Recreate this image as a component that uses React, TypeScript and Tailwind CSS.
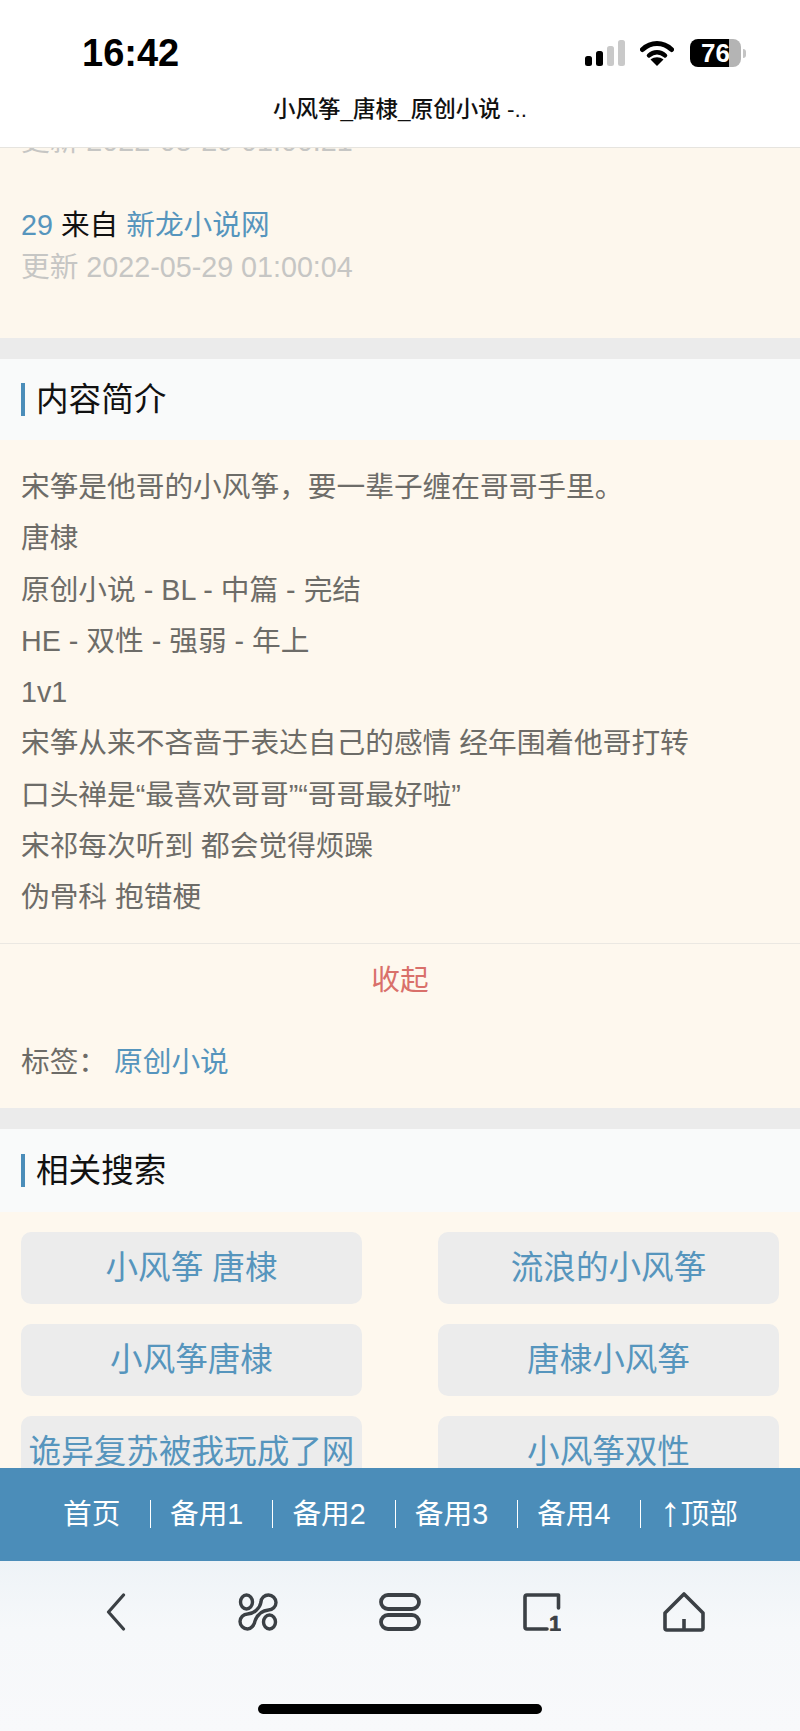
const introLines = [
  '宋筝是他哥的小风筝，要一辈子缠在哥哥手里。',
  '唐棣',
  '原创小说 - BL - 中篇 - 完结',
  'HE - 双性 - 强弱 - 年上',
  '1v1',
  '宋筝从来不吝啬于表达自己的感情 经年围着他哥打转',
  '口头禅是“最喜欢哥哥”“哥哥最好啦”',
  '宋祁每次听到 都会觉得烦躁',
  '伪骨科 抱错梗',
];

const related = ['小风筝 唐棣', '流浪的小风筝', '小风筝唐棣', '唐棣小风筝', '诡异复苏被我玩成了网', '小风筝双性'];

const navItems = ['备用1', '备用2', '备用3', '备用4'];

function SectionTitle({ title, tall }: { title: string; tall?: boolean }) {
  return (
    <div className={tall ? 'flex h-[83px] items-center bg-[#f9fafa] pl-[21px]' : 'flex h-[81px] items-center bg-[#f9fafa] pl-[21px]'}>
      <div className="h-[33px] w-[4px] bg-[#4b8db9]" />
      <h2 className="ml-[11px] text-[32.6px] leading-[40px] text-[#111]">{title}</h2>
    </div>
  );
}

function StatusIcons() {
  return (
    <div className="flex items-center">
      <svg width="40" height="26" viewBox="0 0 40 26">
        <rect x="0" y="16" width="7" height="10" rx="2.5" fill="#000" />
        <rect x="11" y="11" width="7" height="15" rx="2.5" fill="#000" />
        <rect x="22" y="6" width="7" height="20" rx="2.5" fill="#c9c9c9" />
        <rect x="33" y="0" width="7" height="26" rx="2.5" fill="#c9c9c9" />
      </svg>
      <svg className="ml-[15px]" width="34" height="26" viewBox="0 0 34 26" fill="none">
        <path d="M2.5 9.5C11 1.5 23 1.5 31.5 9.5" stroke="#000" strokeWidth="5" strokeLinecap="round" />
        <path d="M9 15.5C13.5 11 20.5 11 25 15.5" stroke="#000" strokeWidth="4.5" strokeLinecap="round" />
        <path d="M17 26L10.5 19.5C14.5 16.5 19.5 16.5 23.5 19.5Z" fill="#000" />
      </svg>
      <div className="ml-[16px] flex h-[28px] items-center">
        <div className="flex h-[28px] w-[39px] items-center justify-end rounded-l-[8px] bg-black">
          <span className="-mr-[1px] text-[26px] leading-[28px] font-bold text-white">76</span>
        </div>
        <div className="h-[28px] w-[12px] rounded-r-[8px] bg-[#b4b4b4]" />
        <div className="ml-[2px] h-[9px] w-[3px] rounded-r-full bg-[#c4c4c4]" />
      </div>
    </div>
  );
}

function ToolbarIcons() {
  return (
    <div className="grid grid-cols-5 px-[45px] pt-[30px]">
      <div className="flex h-[42px] items-center justify-center">
        <svg width="20" height="38" viewBox="0 0 20 38" fill="none" stroke="#3b4045" strokeWidth="3.2" strokeLinecap="round" strokeLinejoin="round">
          <path d="M17.5 2L2.5 19L17.5 36" />
        </svg>
      </div>
      <div className="flex h-[42px] items-center justify-center">
        <svg width="40" height="38" viewBox="0 0 40 38" fill="none" stroke="#3b4045" strokeWidth="3.4">
          <ellipse cx="8.5" cy="9" rx="6" ry="7" />
          <ellipse cx="31.5" cy="29" rx="6" ry="7" />
          <path d="M23 9C23 5 26.5 2 30.5 2C34.5 2 38 5.5 38 9.5C38 13.5 34.5 17 30.5 17C25 17.5 20 20 17 28C16.5 32 13 36 9.5 36C5.5 36 2 32.5 2 28.5C2 24.5 5.5 21 9.5 21C16 21 22 15 23 9Z" />
        </svg>
      </div>
      <div className="flex h-[42px] items-center justify-center">
        <svg width="42" height="38" viewBox="0 0 42 38" fill="none" stroke="#3b4045" strokeWidth="3.8">
          <rect x="2" y="2" width="38" height="14" rx="7" />
          <rect x="2" y="22" width="38" height="14" rx="7" />
        </svg>
      </div>
      <div className="flex h-[42px] items-center justify-center">
        <svg width="38" height="38" viewBox="0 0 38 38" fill="none" stroke="#3b4045" strokeWidth="3.6" strokeLinecap="round" strokeLinejoin="round">
          <path d="M35.5 15V2H4A2 2 0 0 0 2 4V34A2 2 0 0 0 4 36H24" />
          <text x="26" y="37.5" fontSize="22" fontWeight="700" fill="#3b4045" stroke="#3b4045" strokeWidth="0.6">1</text>
        </svg>
      </div>
      <div className="flex h-[42px] items-center justify-center">
        <svg width="42" height="40" viewBox="0 0 42 40" fill="none" stroke="#3b4045" strokeWidth="3.6" strokeLinejoin="round">
          <path d="M21 2L40 21V36A2 2 0 0 1 38 38H4A2 2 0 0 1 2 36V21Z" />
          <path d="M21 27V38" />
        </svg>
      </div>
    </div>
  );
}

export default function App() {
  return (
    <div className="flex h-[1731px] w-[800px] flex-col overflow-hidden bg-white font-['Liberation_Sans','Noto_Sans_CJK_SC',sans-serif]">
      {/* Status bar + page title */}
      <header className="h-[148px] shrink-0 border-b border-[#e6e4df] bg-white">
        <div className="mt-[33px] flex h-[40px] items-center justify-between pr-[54px] pl-[82px]">
          <span className="text-[38px] leading-[40px] font-bold text-black">16:42</span>
          <StatusIcons />
        </div>
        <div className="mt-[17px] flex h-[40px] items-center justify-center text-[22.5px] font-medium text-[#111]">
          小风筝_唐棣_原创小说 -..
        </div>
      </header>

      <main className="min-h-0 flex-1 overflow-hidden bg-[#fdf7ed]">
        {/* Source list, scrolled partly under the header */}
        <section className="-mt-[28px] px-[21px] pb-[50px] text-[28.7px] leading-[42px]">
          <p className="text-[#c6c6c4]">更新 2022-05-29 01:00:21</p>
          <p className="mt-[42px] text-[#111]">
            <span className="text-[#5695bd]">29</span> 来自 <span className="text-[#5695bd]">新龙小说网</span>
          </p>
          <p className="text-[#c6c6c4]">更新 2022-05-29 01:00:04</p>
        </section>

        <div className="h-[21px] bg-[#ebebeb]" />
        <SectionTitle title="内容简介" />
        <section className="bg-[#fef8ee]">
          <div className="border-b border-[#ebe8e2] px-[21px] pt-[22px] pb-[20px] text-[28.7px] leading-[51.25px] text-[#6d6c68]">
            {introLines.map((line) => (
              <p key={line}>{line}</p>
            ))}
          </div>
          <div className="flex h-[72px] items-center justify-center text-[28.7px] text-[#d9706a]">收起</div>
          <div className="flex px-[21px] pt-[21px] pb-[20px] text-[28.7px] leading-[51px]">
            <span className="text-[#6d6c68]">标签：</span>
            <a className="ml-[7px] text-[#5695bd]">原创小说</a>
          </div>
        </section>

        <div className="h-[21px] bg-[#ebebeb]" />
        <SectionTitle title="相关搜索" tall />
        <section className="grid grid-cols-2 gap-x-[76px] gap-y-[20px] bg-[#fef8ee] px-[21px] pt-[20px] pb-[20px]">
          {related.map((item) => (
            <a
              key={item}
              className="flex h-[72px] items-center justify-center overflow-hidden rounded-[10px] bg-[#ececec] px-[7px] text-[32.6px] whitespace-nowrap text-[#5695bd]"
            >
              {item}
            </a>
          ))}
        </section>
      </main>

      {/* Site bottom nav */}
      <nav className="flex h-[93px] shrink-0 items-center bg-[#4b8db9] pb-[2px] pl-[63px] text-[28.7px] leading-[36px] text-white">
        <a className="w-[87px]">首页</a>
        {navItems.map((item) => (
          <a key={item} className="flex h-[28px] w-[122.4px] items-center border-l border-white pl-[19px]">
            {item}
          </a>
        ))}
        <a className="flex h-[28px] items-center border-l border-white pl-[19px]">
          <span className="-mt-[4px] text-[42px] leading-[28px]">↑</span>
          <span>顶部</span>
        </a>
      </nav>

      {/* Browser toolbar */}
      <footer className="flex h-[170px] shrink-0 flex-col justify-between bg-gradient-to-b from-[#eef3f7] via-[#f6f8fa] via-40% to-[#f8f9fb] pb-[17px]">
        <ToolbarIcons />
        <div className="mx-auto h-[10px] w-[284px] rounded-full bg-black" />
      </footer>
    </div>
  );
}
